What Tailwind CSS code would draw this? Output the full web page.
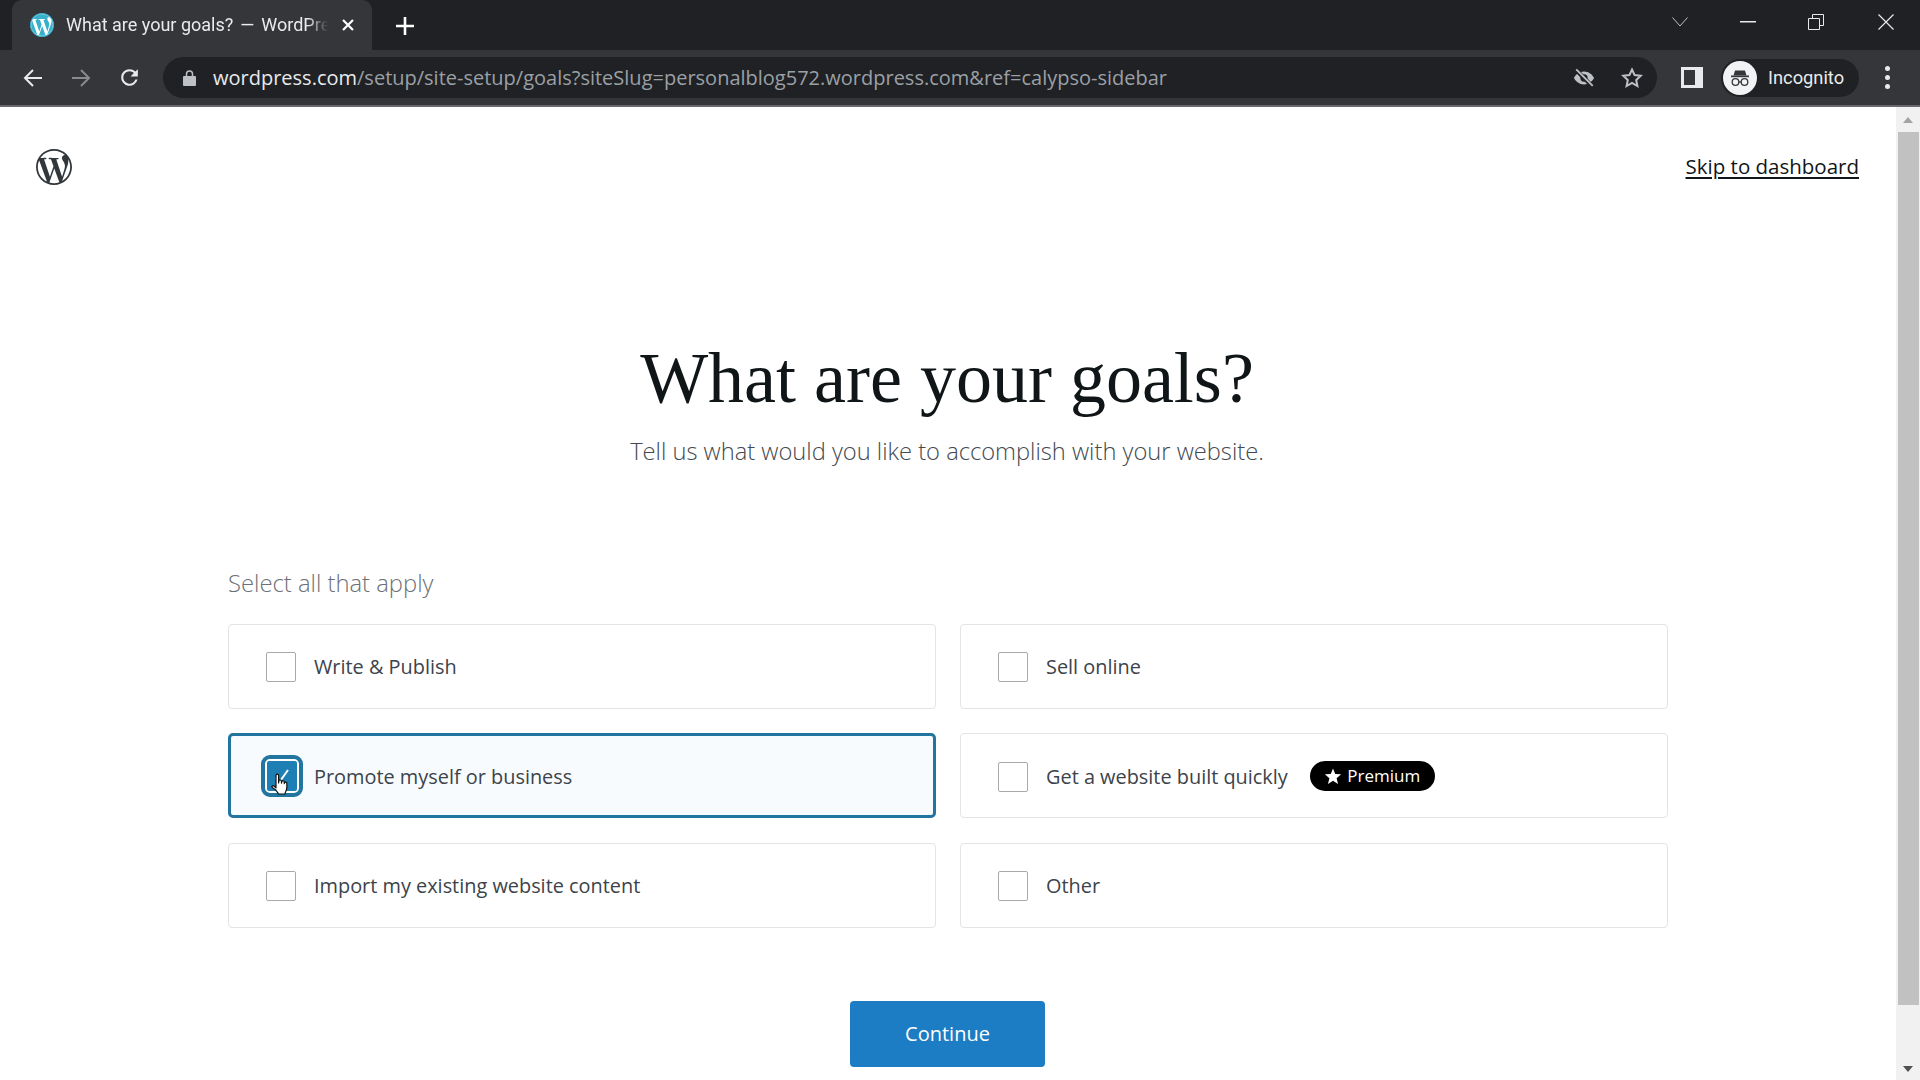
<!DOCTYPE html>
<html lang="en">
<head>
  <meta charset="UTF-8" />
  <title>What are your goals? — WordPress.com</title>
  <script src="https://cdn.jsdelivr.net/npm/@tailwindcss/browser@4"></script>
</head>
<body class="h-screen w-screen overflow-hidden flex flex-col bg-white font-['Open_Sans',sans-serif]">

  <!-- Tab strip -->
  <div class="h-[50px] shrink-0 bg-[#202124] flex items-end pl-[12px] text-white">
    <div class="w-[360px] h-[50px] bg-[#35363a] rounded-t-[10px] flex items-center pl-[18px]">
      <svg class="w-[24px] h-[24px] shrink-0" viewBox="0 0 24 24"><circle cx="12" cy="12" r="11.500" fill="#fff"/><path fill="#38b0cc" d="M21.469 6.825c.84 1.537 1.318 3.3 1.318 5.175 0 3.979-2.156 7.456-5.363 9.325l3.295-9.527c.615-1.54.82-2.771.82-3.864 0-.405-.026-.78-.07-1.11m-7.981.105c.647-.03 1.232-.105 1.232-.105.582-.075.514-.93-.067-.899 0 0-1.755.135-2.88.135-1.064 0-2.85-.15-2.85-.15-.585-.03-.661.855-.075.885 0 0 .54.061 1.125.09l1.68 4.605-2.37 7.08L5.354 6.9c.649-.03 1.234-.1 1.234-.1.585-.075.516-.93-.065-.896 0 0-1.746.138-2.874.138-.2 0-.438-.008-.69-.015C4.911 3.15 8.235 1.215 12 1.215c2.809 0 5.365 1.072 7.286 2.833-.046-.003-.091-.009-.141-.009-1.06 0-1.812.923-1.812 1.914 0 .89.513 1.643 1.06 2.531.411.72.89 1.643.89 2.977 0 .915-.354 1.994-.821 3.479l-1.075 3.585-3.9-11.61.001.014zM12 22.784c-1.059 0-2.081-.153-3.048-.437l3.237-9.406 3.315 9.087c.024.053.05.101.078.149-1.12.393-2.325.609-3.582.609M1.211 12c0-1.564.336-3.05.935-4.39L7.29 21.709C3.694 19.96 1.212 16.271 1.211 12"/><circle cx="12" cy="12" r="11.400" fill="none" stroke="#38b0cc" stroke-width="1.200"/></svg>
      <span class="ml-[12px] w-[262px] h-[26px] overflow-hidden whitespace-nowrap text-[18px] leading-[26px] text-[#e8eaed] font-['Roboto',sans-serif] [mask-image:linear-gradient(to_right,black_92%,transparent)]">What are your goals?<span class="mx-[7px]">—</span>WordPre</span>
      <svg class="ml-[13px] w-[14px] h-[14px] shrink-0" viewBox="0 0 14 14" stroke="#fff" stroke-width="2.200"><path d="M2 2l10 10M12 2L2 12"/></svg>
    </div>
    <div class="h-[50px] w-[66px] flex items-center justify-center">
      <svg class="w-[20px] h-[20px] mt-[1px]" viewBox="0 0 20 20" stroke="#fff" stroke-width="2.600"><path d="M10 1v18M1 10h18"/></svg>
    </div>
    <div class="flex-1"></div>
    <div class="h-[50px] flex items-center text-white">
      <svg class="w-[16px] h-[10px] mb-[6px]" viewBox="0 0 16 10" fill="none" stroke="#bdc1c6" stroke-width="1"><path d="M.5.5 8 9l7.500-8.500"/></svg>
      <svg class="ml-[52px] w-[16px] h-[2px] mb-[6px]" viewBox="0 0 16 2"><rect width="16" height="1.500" fill="#e8eaed"/></svg>
      <svg class="ml-[52px] w-[16px] h-[16px] mb-[6px]" viewBox="0 0 16 16" fill="none" stroke="#e8eaed" stroke-width="1"><path d="M.5 4.500h11v11H.5zM4.500 4.500V.500h11v11h-4"/></svg>
      <svg class="ml-[54px] mr-[26px] w-[16px] h-[16px] mb-[6px]" viewBox="0 0 16 16" stroke="#e8eaed" stroke-width="1.200"><path d="M.5.5l15 15M15.500.5l-15 15"/></svg>
    </div>
  </div>

  <!-- Toolbar -->
  <div class="h-[55px] shrink-0 bg-[#35363a] flex items-center relative">
    <div class="w-[163px] h-full flex items-center pl-[23px] shrink-0">
      <svg class="w-[20px] h-[20px]" viewBox="0 0 20 20" fill="none" stroke="#e8eaed" stroke-width="2"><path d="M19 10H2M10 2l-8 8 8 8"/></svg>
      <svg class="ml-[28px] w-[20px] h-[20px]" viewBox="0 0 20 20" fill="none" stroke="#8a8b8e" stroke-width="2"><path d="M1 10h17M10 2l8 8-8 8"/></svg>
      <svg class="ml-[26px] w-[25px] h-[25px]" viewBox="0 0 24 24" fill="#e8eaed"><path d="M17.650 6.350A7.960 7.960 0 0 0 12 4a8 8 0 1 0 7.730 10h-2.080A6 6 0 1 1 12 6c1.660 0 3.140.690 4.220 1.780L13 11h7V4z"/></svg>
    </div>
    <div class="w-[1494px] h-[41px] bg-[#202124] rounded-full flex items-center shrink-0">
      <svg class="ml-[20px] w-[13px] h-[16px]" viewBox="0 0 13 16"><path fill="#bdc1c6" d="M1 6h11a1 1 0 0 1 1 1v8a1 1 0 0 1-1 1H1a1 1 0 0 1-1-1V7a1 1 0 0 1 1-1z"/><path fill="none" stroke="#bdc1c6" stroke-width="1.500" d="M3.500 6.500V4a3 3 0 0 1 6 0v2.500"/></svg>
      <span class="ml-[17px] mt-[1px] text-[20px] leading-[28px] whitespace-nowrap text-[#9aa0a6]"><span class="text-[#e8eaed]">wordpress.com</span>/setup/site-setup/goals?siteSlug=personalblog572.wordpress.com&amp;ref=calypso-sidebar</span>
      <div class="flex-1"></div>
      <svg class="w-[22px] h-[22px]" viewBox="0 0 24 24" fill="#bdc1c6"><path d="M12 5c-5 0-9 3.200-11 7 2 3.800 6 7 11 7s9-3.200 11-7c-2-3.800-6-7-11-7zm0 11a4 4 0 1 1 0-8 4 4 0 0 1 0 8z"/><path d="M3 3 21 21" stroke="#202124" stroke-width="4.500"/><path d="M3.500 2.500 21.500 20.500" stroke="#bdc1c6" stroke-width="2"/></svg>
      <svg class="ml-[25px] mr-[13px] w-[24px] h-[24px]" viewBox="0 0 24 24" fill="none" stroke="#bdc1c6" stroke-width="2"><path d="m12 3.500 2.600 5.600 6.100.7-4.500 4.200 1.200 6-5.400-3-5.400 3 1.200-6-4.500-4.200 6.100-.7z"/></svg>
    </div>
    <div class="ml-[24px] w-[22px] h-[21px] bg-[#e8eaed] flex items-center justify-start pl-[3px]">
      <div class="w-[11px] h-[15px] bg-[#35363a]"></div>
    </div>
    <div class="ml-[18px] w-[138px] h-[38px] bg-[#202124] rounded-full flex items-center pl-[2px]">
      <div class="w-[34px] h-[34px] bg-[#f1f3f4] rounded-full flex items-center justify-center">
        <svg class="w-[26px] h-[26px]" viewBox="0 0 26 26" fill="none"><path fill="#35363a" d="M8 5.500h10l1.500 5h-13z"/><rect x="4" y="10.500" width="18" height="1.700" fill="#35363a"/><circle cx="8.500" cy="17" r="3.300" stroke="#35363a" stroke-width="1.300"/><circle cx="17.500" cy="17" r="3.300" stroke="#35363a" stroke-width="1.300"/><path d="M11.800 17h2.400" stroke="#35363a" stroke-width="1.300"/></svg>
      </div>
      <span class="ml-[11px] text-[18.300px] text-[#e8eaed] font-['Roboto',sans-serif]">Incognito</span>
    </div>
    <div class="ml-[26px] flex flex-col gap-[4px]">
      <div class="w-[5px] h-[5px] rounded-full bg-[#e8eaed]"></div>
      <div class="w-[5px] h-[5px] rounded-full bg-[#e8eaed]"></div>
      <div class="w-[5px] h-[5px] rounded-full bg-[#e8eaed]"></div>
    </div>
  </div>
  <div class="h-[2px] shrink-0 bg-[#67686b]"></div>

  <div class="flex-1 flex min-h-0">
    <!-- Page -->
    <main class="flex-1 min-w-0 overflow-hidden flex flex-col items-center text-[#3c434a]">
      <header class="w-full h-[120px] shrink-0 flex items-center justify-between pl-[36px] pr-[37px]">
        <svg class="w-[36px] h-[36px]" viewBox="0 0 24 24" fill="#32373c"><path d="M21.469 6.825c.84 1.537 1.318 3.3 1.318 5.175 0 3.979-2.156 7.456-5.363 9.325l3.295-9.527c.615-1.54.82-2.771.82-3.864 0-.405-.026-.78-.07-1.11m-7.981.105c.647-.03 1.232-.105 1.232-.105.582-.075.514-.93-.067-.899 0 0-1.755.135-2.88.135-1.064 0-2.85-.15-2.85-.15-.585-.03-.661.855-.075.885 0 0 .54.061 1.125.09l1.68 4.605-2.37 7.08L5.354 6.9c.649-.03 1.234-.1 1.234-.1.585-.075.516-.93-.065-.896 0 0-1.746.138-2.874.138-.2 0-.438-.008-.69-.015C4.911 3.15 8.235 1.215 12 1.215c2.809 0 5.365 1.072 7.286 2.833-.046-.003-.091-.009-.141-.009-1.06 0-1.812.923-1.812 1.914 0 .89.513 1.643 1.06 2.531.411.72.89 1.643.89 2.977 0 .915-.354 1.994-.821 3.479l-1.075 3.585-3.9-11.61.001.014zM12 22.784c-1.059 0-2.081-.153-3.048-.437l3.237-9.406 3.315 9.087c.024.053.05.101.078.149-1.12.393-2.325.609-3.582.609M1.211 12c0-1.564.336-3.05.935-4.39L7.29 21.709C3.694 19.96 1.212 16.271 1.211 12M12 0C5.385 0 0 5.385 0 12s5.385 12 12 12 12-5.385 12-12S18.615 0 12 0"/></svg>
        <a href="#" class="mb-[2px] text-[20.500px] leading-[28px] text-[#101517] underline underline-offset-[3px] decoration-2">Skip to dashboard</a>
      </header>

      <h1 class="mt-[111px] mr-[2px] h-[80px] text-[72px] leading-[80px] text-[#101517] font-['Liberation_Serif',serif]">What are your goals?</h1>
      <p class="mt-[18px] mr-[2px] text-[23.700px] leading-[30px] font-light text-[#43494f]">Tell us what would you like to accomplish with your website.</p>

      <div class="mt-[102px] w-[1440px]">
        <p class="text-[23.800px] leading-[30px] font-light text-[#6b7076]">Select all that apply</p>
        <div class="mt-[25.750px] grid grid-cols-2 gap-x-[24px] gap-y-[24.5px] text-[19.900px]">

          <label class="h-[85px] pt-[2px] border border-[#e2e4e7] rounded-[4px] flex items-center pl-[37px]">
            <span class="w-[30px] h-[30px] border border-[#a7aaad] rounded-[2px] bg-white"></span>
            <span class="ml-[18px]">Write &amp; Publish</span>
          </label>
          <label class="h-[85px] pt-[2px] border border-[#e2e4e7] rounded-[4px] flex items-center pl-[37px]">
            <span class="w-[30px] h-[30px] border border-[#a7aaad] rounded-[2px] bg-white"></span>
            <span class="ml-[18px]">Sell online</span>
          </label>

          <label class="h-[85px] pt-[1px] border-[3px] border-[#21759f] rounded-[5px] bg-[#f8fbfd] flex items-center pl-[30px]">
            <span class="relative w-[42px] h-[42px] border-[4px] border-[#21759f] rounded-[9px] bg-white flex items-center justify-center">
              <span class="w-[30px] h-[30px] bg-[#1e7fb5] rounded-[2px] flex items-center justify-center">
                <svg class="w-[24px] h-[24px]" viewBox="0 0 24 24" fill="none" stroke="#fff" stroke-width="2"><path d="M6 14l3.500 4L18 6"/></svg>
              </span>
              <svg class="absolute left-[6px] top-[14px] w-[18px] h-[24px]" viewBox="0 0 18 24"><path fill="#fff" stroke="#111" stroke-width="1.200" stroke-linejoin="round" d="M5 2.500a1.300 1.300 0 0 1 2.600 0V10l.4-2.500a1.300 1.300 0 0 1 2.400.3l.1 2.400.3-1.800a1.300 1.300 0 0 1 2.400.3l.1 2 .3-1a1.200 1.200 0 0 1 2.200.4c.2 3 .2 5.500-.6 7.400-.6 1.600-1.200 2.600-1.200 3.500H7.500c-.5-1.500-1.500-2.500-3-4.300L1.200 14.500c-.8-1.200.7-2.500 1.800-1.500L5 14.800z"/></svg>
            </span>
            <span class="ml-[11px] mt-[1px]">Promote myself or business</span>
          </label>
          <label class="h-[85px] pt-[2px] border border-[#e2e4e7] rounded-[4px] flex items-center pl-[37px]">
            <span class="w-[30px] h-[30px] border border-[#a7aaad] rounded-[2px] bg-white"></span>
            <span class="ml-[18px]">Get a website built quickly</span>
            <span class="ml-[22px] -mt-[2px] h-[30px] w-[125px] rounded-full bg-black text-white text-[17px] flex items-center justify-center gap-[5px]">
              <svg class="w-[18px] h-[18px]" viewBox="0 0 24 24" fill="#fff"><path d="m12 2 3 7.200 7.800.6-6 5.100 1.900 7.600L12 18.400l-6.700 4.100 1.900-7.600-6-5.100L9 9.200z"/></svg>
              Premium
            </span>
          </label>

          <label class="h-[85px] pt-[2px] border border-[#e2e4e7] rounded-[4px] flex items-center pl-[37px]">
            <span class="w-[30px] h-[30px] border border-[#a7aaad] rounded-[2px] bg-white"></span>
            <span class="ml-[18px]">Import my existing website content</span>
          </label>
          <label class="h-[85px] pt-[2px] border border-[#e2e4e7] rounded-[4px] flex items-center pl-[37px]">
            <span class="w-[30px] h-[30px] border border-[#a7aaad] rounded-[2px] bg-white"></span>
            <span class="ml-[18px]">Other</span>
          </label>
        </div>
      </div>

      <button class="mt-[73.250px] mr-[1px] w-[195px] h-[66px] shrink-0 bg-[#1c7dc4] rounded-[4px] text-white text-[20px]">Continue</button>
    </main>

    <!-- Scrollbar -->
    <div class="w-[24px] shrink-0 bg-[#f1f1f1] flex flex-col items-center">
      <div class="h-[25px] w-full flex items-center justify-center">
        <div class="w-0 h-0 border-x-[5px] border-x-transparent border-b-[6px] border-b-[#a3a3a3]"></div>
      </div>
      <div class="w-[21px] h-[873px] bg-[#c1c1c1]"></div>
      <div class="flex-1 w-full flex items-end justify-center pb-[8px]">
        <div class="w-0 h-0 border-x-[5px] border-x-transparent border-t-[6px] border-t-[#505050]"></div>
      </div>
    </div>
  </div>
</body>
</html>
